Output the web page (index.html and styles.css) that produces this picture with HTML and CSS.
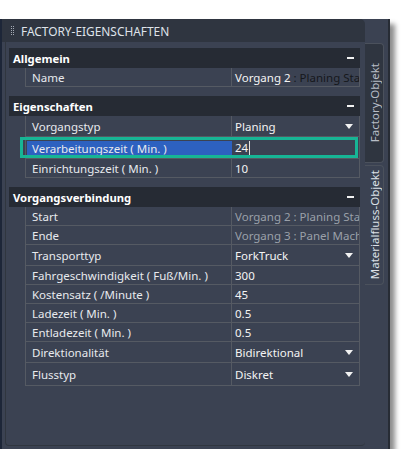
FILE: index.html
```html
<!DOCTYPE html>
<html lang="de">
<head>
<meta charset="utf-8">
<link rel="stylesheet" href="styles.css">
</head>
<body>
<div class="window">
  <div class="main">
    <div class="titlebar">
      <svg class="grip" width="4" height="9" viewBox="0 0 4 9"><g fill="#a3a9b3"><rect x="0" y="0" width="1" height="1"/><rect x="2" y="0" width="1" height="1"/><rect x="0" y="2" width="1" height="1"/><rect x="2" y="2" width="1" height="1"/><rect x="0" y="4" width="1" height="1"/><rect x="2" y="4" width="1" height="1"/><rect x="0" y="6" width="1" height="1"/><rect x="2" y="6" width="1" height="1"/><rect x="0" y="8" width="1" height="1"/><rect x="2" y="8" width="1" height="1"/></g></svg>
      <span class="title">FACTORY-EIGENSCHAFTEN</span>
    </div>
    <div class="content">
      <div class="section">
        <div class="sec-head"><span>Allgemein</span><i class="minus"></i></div>
        <div class="row"><div class="lbl">Name</div><div class="val">Vorgang 2<span class="dark"> : Planing Station</span></div></div>
      </div>
      <div class="section">
        <div class="sec-head"><span>Eigenschaften</span><i class="minus"></i></div>
        <div class="row dd"><div class="lbl">Vorgangstyp</div><div class="val">Planing<i class="arrow"></i></div></div>
        <div class="row sel"><div class="lbl">Verarbeitungszeit ( Min. )</div><div class="val">24<span class="caret"></span></div></div>
        <div class="row"><div class="lbl">Einrichtungszeit ( Min. )</div><div class="val">10</div></div>
      </div>
      <div class="section">
        <div class="sec-head"><span>Vorgangsverbindung</span><i class="minus"></i></div>
        <div class="row"><div class="lbl">Start</div><div class="val grey">Vorgang 2 : Planing Station</div></div>
        <div class="row"><div class="lbl">Ende</div><div class="val grey">Vorgang 3 : Panel Machine</div></div>
        <div class="row dd"><div class="lbl">Transporttyp</div><div class="val">ForkTruck<i class="arrow"></i></div></div>
        <div class="row"><div class="lbl">Fahrgeschwindigkeit ( Fuß/Min. )</div><div class="val">300</div></div>
        <div class="row"><div class="lbl">Kostensatz ( /Minute )</div><div class="val">45</div></div>
        <div class="row"><div class="lbl">Ladezeit ( Min. )</div><div class="val">0.5</div></div>
        <div class="row"><div class="lbl">Entladezeit ( Min. )</div><div class="val">0.5</div></div>
        <div class="row dd"><div class="lbl">Direktionalität</div><div class="val">Bidirektional<i class="arrow"></i></div></div>
        <div class="row dd fl"><div class="lbl">Flusstyp</div><div class="val">Diskret<i class="arrow"></i></div></div>
      </div>
    </div>
  </div>
  <div class="tabs">
    <div class="tab"><span>Factory-Objekt</span></div>
    <div class="tab active"><span>Materialfluss-Objekt</span></div>
  </div>
</div>
</body>
</html>
```
FILE: styles.css
```css
* { box-sizing: border-box; }
html, body { margin: 0; padding: 0; background: #ffffff; }
body {
  font-family: "Noto Sans", "Open Sans", sans-serif;
  font-size: 11.5px;
  color: #e8eaee;
}
.window {
  margin-top: 19px;
  width: 390px;
  height: 430px;
  display: flex;
  background: #3b4252;
  border-left: 2px solid #1d2638;
  border-right: 2px solid #272c35;
  box-shadow: 5px 5px 5px rgba(0, 0, 0, 0.45);
}
.main {
  width: 363px;
  display: flex;
  flex-direction: column;
}
.titlebar {
  height: 23px;
  background: #2f3540;
  border-radius: 0 5px 0 0;
  display: flex;
  align-items: center;
  padding-left: 9px;
}
.grip { display: block; margin-right: 6px; }
.title {
  font-size: 11.9px;
  color: #dfe3ea;
}
.content {
  flex: 1;
  margin: 0 0 3px 3px;
  border-left: 1px solid #30363f;
  border-bottom: 1px solid #30363f;
  border-radius: 0 0 4px 4px;
  padding: 6px 5px 0 3px;
}
.section { margin-bottom: 9px; }
.sec-head {
  height: 20px;
  background: #262b34;
  display: flex;
  align-items: center;
  justify-content: space-between;
  padding-left: 4px;
  font-weight: bold;
  font-size: 11.3px;
  color: #ffffff;
}
.minus {
  width: 7px;
  height: 2px;
  background: #f2f2f2;
  margin-right: 6px;
}
.row {
  position: relative;
  height: 19px;
  margin-left: 16px;
  display: grid;
  grid-template-columns: 206px 1fr;
  border-left: 1px solid #555a63;
  border-right: 1px solid #555a63;
  border-bottom: 1px solid #555a63;
}
.row.dd { height: 21px; }
.row.fl { height: 23px; }
.row.sel { height: 22px; }
.lbl {
  border-right: 1px solid #555a63;
  padding-left: 6px;
  display: flex;
  align-items: center;
  white-space: nowrap;
  overflow: hidden;
}
.val {
  padding-left: 3px;
  padding-right: 6px;
  display: flex;
  align-items: center;
  white-space: nowrap;
  overflow: hidden;
  color: #f4f4f4;
}
.val.grey { color: #9aa0a9; }
.dark { color: #16181c; white-space: pre; }
.arrow {
  margin-left: auto;
  width: 0;
  height: 0;
  border-left: 4px solid transparent;
  border-right: 4px solid transparent;
  border-top: 5px solid #f2f2f2;
}
.sel .lbl {
  background: #2d61c0;
  margin: 4px 0 2px 1px;
  padding-left: 5px;
  border-right: none;
}
.sel::after {
  content: "";
  position: absolute;
  left: -6px;
  right: 1px;
  top: 0;
  bottom: 0;
  border: 3px solid #17b595;
  pointer-events: none;
}
.caret {
  display: inline-block;
  width: 1px;
  height: 14px;
  background: #e0e0e0;
  margin-left: 1px;
}
.tabs {
  width: 23px;
  padding-top: 24px;
  display: flex;
  flex-direction: column;
  gap: 2px;
}
.tab {
  width: 19px;
  height: 120px;
  background: #2f3540;
  border: 1px solid #4b515c;
  border-left: none;
  border-radius: 0 4px 4px 0;
  display: flex;
  align-items: center;
  justify-content: center;
  color: #b8bdc6;
  font-size: 11.5px;
}
.tab.active {
  background: #3b4252;
  color: #dde1e8;
}
.tab span {
  writing-mode: vertical-rl;
  transform: rotate(180deg);
  white-space: nowrap;
}
```
